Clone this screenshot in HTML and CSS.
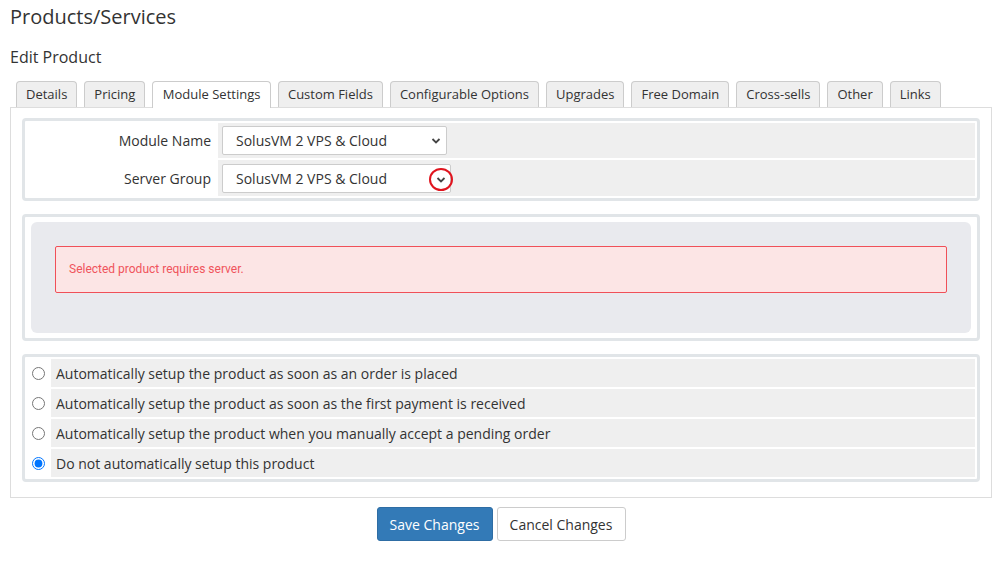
FILE: index.html
```html
<!DOCTYPE html>
<html>
<head>
<meta charset="utf-8">
<link rel="stylesheet" href="styles.css">
</head>
<body>
<h1 class="page-title">Products/Services</h1>
<h2 class="sub-title">Edit Product</h2>
<ul class="tabs">
  <li class="tab">Details</li>
  <li class="tab">Pricing</li>
  <li class="tab active">Module Settings</li>
  <li class="tab">Custom Fields</li>
  <li class="tab">Configurable Options</li>
  <li class="tab">Upgrades</li>
  <li class="tab">Free Domain</li>
  <li class="tab">Cross-sells</li>
  <li class="tab">Other</li>
  <li class="tab">Links</li>
</ul>
<div class="tab-panel">
  <div class="box">
    <table class="form-table">
      <tr>
        <td class="label">Module Name</td>
        <td class="field">
          <div class="select w1">SolusVM 2 VPS &amp; Cloud
            <svg class="chev" width="10" height="8" viewBox="0 0 10 8"><path d="M1.5 2 L5 5.5 L8.5 2" fill="none" stroke="#444" stroke-width="1.8"/></svg>
          </div>
        </td>
      </tr>
      <tr>
        <td class="label">Server Group</td>
        <td class="field">
          <div class="select w2">SolusVM 2 VPS &amp; Cloud
            <svg class="chev" width="10" height="8" viewBox="0 0 10 8"><path d="M1.5 2 L5 5.5 L8.5 2" fill="none" stroke="#444" stroke-width="1.8"/></svg>
            <span class="ring"></span>
          </div>
        </td>
      </tr>
    </table>
  </div>
  <div class="box box-alert">
    <div class="grey-panel">
      <div class="alert">Selected product requires server.</div>
    </div>
  </div>
  <div class="box">
    <table class="radio-table">
      <tr><td class="rcell"><input type="radio" name="auto"></td><td class="rtext">Automatically setup the product as soon as an order is placed</td></tr>
      <tr><td class="rcell"><input type="radio" name="auto"></td><td class="rtext">Automatically setup the product as soon as the first payment is received</td></tr>
      <tr><td class="rcell"><input type="radio" name="auto"></td><td class="rtext">Automatically setup the product when you manually accept a pending order</td></tr>
      <tr><td class="rcell"><input type="radio" name="auto" checked></td><td class="rtext">Do not automatically setup this product</td></tr>
    </table>
  </div>
</div>
<div class="actions">
  <button class="btn btn-primary">Save Changes</button>
  <button class="btn btn-default">Cancel Changes</button>
</div>
</body>
</html>
```
FILE: styles.css
```css
html, body {
  margin: 0;
  padding: 0;
  background: #fff;
}
body {
  padding: 0 6px 0 10px;
  font-family: "Open Sans", "DejaVu Sans", sans-serif;
  color: #333;
  font-size: 14px;
}
.page-title {
  font-size: 20px;
  font-weight: 400;
  line-height: 26px;
  margin: 4px 0 0 0;
  color: #333;
}
.sub-title {
  font-size: 16px;
  font-weight: 400;
  line-height: 22px;
  margin: 16px 0 0 0;
  color: #333;
}
.tabs {
  list-style: none;
  display: flex;
  margin: 13px 0 0 0;
  padding: 0 0 0 6px;
  position: relative;
  z-index: 1;
}
.tab {
  height: 25px;
  line-height: 25px;
  padding: 0 9px;
  margin-right: 7px;
  font-size: 13px;
  background: #efefef;
  border: 1px solid #ccc;
  border-bottom: none;
  border-radius: 4px 4px 0 0;
  color: #333;
}
.tab.active {
  background: #fff;
  height: 26px;
  margin-bottom: -1px;
  padding: 0 9.5px;
}
.tab-panel {
  border: 1px solid #ddd;
  padding: 10px 11px 15px 11px;
}
.box {
  border: 3px solid #e1e5e8;
  border-radius: 4px;
}
.box + .box {
  margin-top: 13px;
}
.form-table, .radio-table {
  width: 100%;
  border-collapse: separate;
  border-spacing: 2px;
}
.form-table td {
  padding: 0;
}
.form-table tr:first-child td {
  height: 35px;
}
.form-table tr:last-child td {
  height: 36px;
}
.label {
  width: 184px;
  text-align: right;
  padding-right: 5px !important;
  font-size: 14px;
  background: #fff;
}
.field {
  background: #efefef;
  padding-left: 4px !important;
}
.select {
  position: relative;
  height: 27px;
  line-height: 27px;
  border: 1px solid #ccc;
  border-radius: 2px;
  background: #fff;
  padding-left: 13px;
  font-size: 14px;
  color: #333;
  box-sizing: content-box;
}
.select.w1 { width: 210px; }
.select.w2 { width: 214px; }
.chev {
  position: absolute;
  right: 5px;
  top: 10px;
}
.select.w2 .chev { right: 4px; top: 11px; }
.ring {
  position: absolute;
  right: -3px;
  top: 3px;
  width: 24px;
  height: 23px;
  border: 2px solid #e0141e;
  border-radius: 50%;
  box-sizing: border-box;
}
.box-alert {
  padding: 5px 6px 5px 6px;
}
.grey-panel {
  background: #e9eaee;
  border-radius: 6px;
  padding: 24px 24px 40px 24px;
}
.alert {
  height: 45px;
  line-height: 45px;
  background: #fce5e5;
  border: 1px solid #f05058;
  border-radius: 2px;
  padding-left: 13px;
  font-family: Roboto, "Liberation Sans", sans-serif;
  font-size: 12px;
  color: #f0545c;
}
.radio-table td {
  padding: 0;
  height: 28px;
}
.rcell {
  width: 22px;
  background: #fff;
  text-align: center;
}
.rcell input {
  margin: 0 0 0 0;
  width: 13px;
  height: 13px;
  vertical-align: middle;
  position: relative;
  top: -1px;
}
.rtext {
  background: #efefef;
  padding-left: 5px !important;
  font-size: 14px;
}
.actions {
  display: flex;
  justify-content: center;
  gap: 4px;
  margin-top: 9px;
}
.btn {
  height: 34px;
  font-family: "Open Sans", "DejaVu Sans", sans-serif;
  font-size: 14px;
  border-radius: 3px;
  padding: 0 12px;
  cursor: pointer;
}
.btn-primary {
  background: #337ab7;
  color: #fff;
  border: 1px solid #2e6da4;
  width: 116px;
}
.btn-default {
  background: #fff;
  color: #333;
  border: 1px solid #ccc;
  width: 129px;
}
```
